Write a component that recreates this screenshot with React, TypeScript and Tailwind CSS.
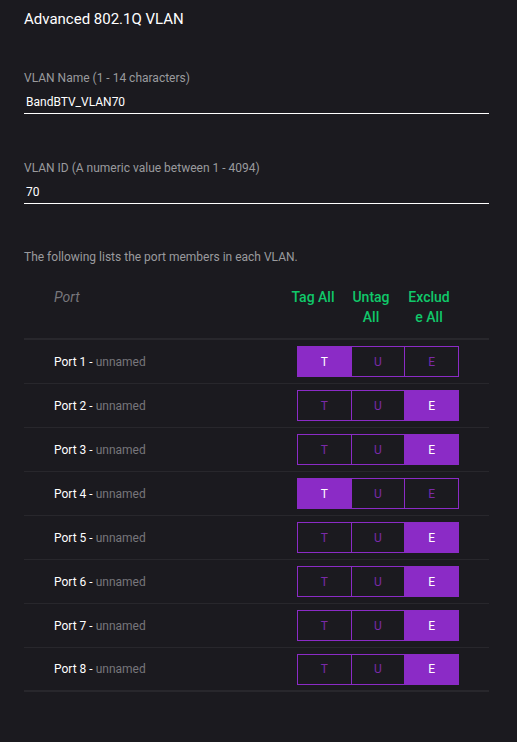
import React from "react";

type Mode = "T" | "U" | "E";

const ports: Mode[] = ["T", "E", "E", "T", "E", "E", "E", "E"];

function Segment({ value }: { value: Mode }) {
  const opts: Mode[] = ["T", "U", "E"];
  return (
    <div className="flex h-[31px] w-[162px] border border-solid border-[#8b2bc6]">
      {opts.map((o, i) => (
        <div
          key={o}
          className={
            "flex flex-1 items-center justify-center text-[12px] " +
            (i > 0 ? "border-l border-solid border-l-[#8b2bc6] " : "") +
            (o === value ? "bg-[#8b2bc6] text-white" : "text-[#7a2aa8]")
          }
        >
          {o}
        </div>
      ))}
    </div>
  );
}

export default function App() {
  return (
    <div
      className="min-h-[742px] w-[517px] bg-[#1b1a1f] pl-6 pr-[28px] pt-[9px]"
      style={{ fontFamily: "Roboto, 'Liberation Sans', sans-serif" }}
    >
      <h1 className="text-[15px] leading-[20px] text-white">Advanced 802.1Q VLAN</h1>

      <div className="mt-[41px]">
        <label className="block text-[12px] leading-[16px] text-[#9a9a9e]">
          VLAN Name (1 - 14 characters)
        </label>
        <div className="mt-[8px] border-b border-white pb-[3px] pl-[2px] text-[12px] leading-[16px] text-white">
          BandBTV_VLAN70
        </div>
      </div>

      <div className="mt-[46px]">
        <label className="block text-[12px] leading-[16px] text-[#9a9a9e]">
          VLAN ID (A numeric value between 1 - 4094)
        </label>
        <div className="mt-[8px] border-b border-white pb-[3px] pl-[2px] text-[12px] leading-[16px] text-white">
          70
        </div>
      </div>

      <p className="mt-[45px] text-[12px] leading-[16px] text-[#9a9a9e]">
        The following lists the port members in each VLAN.
      </p>

      <div className="mt-[22px]">
        <div className="flex border-b-2 border-[#28272c] pb-[11px]">
          <div className="flex-1 pl-[30px] text-[14px] italic leading-[20px] text-[#77767b]">Port</div>
          <div className="flex w-[174px] text-[14px] font-medium leading-[20px] text-[#10c86a]">
            <div className="w-[58px] px-[6px] text-center [overflow-wrap:anywhere]">Tag All</div>
            <div className="w-[58px] px-[6px] text-center [overflow-wrap:anywhere]">Untag All</div>
            <div className="w-[58px] px-[6px] text-center [overflow-wrap:anywhere]">Exclude All</div>
          </div>
          <div className="w-[31px]" />
        </div>

        {ports.map((m, i) => (
          <div
            key={i}
            className={
              "flex h-[44px] items-center " +
              (i === ports.length - 1 ? "border-b-2 border-[#28272c]" : "border-b border-[#28272c]")
            }
          >
            <div className="flex-1 pl-[30px] text-[12px] text-white">
              Port {i + 1} - <span className="text-[#77767b]">unnamed</span>
            </div>
            <div className="pr-[30px]">
              <Segment value={m} />
            </div>
          </div>
        ))}
      </div>
    </div>
  );
}
